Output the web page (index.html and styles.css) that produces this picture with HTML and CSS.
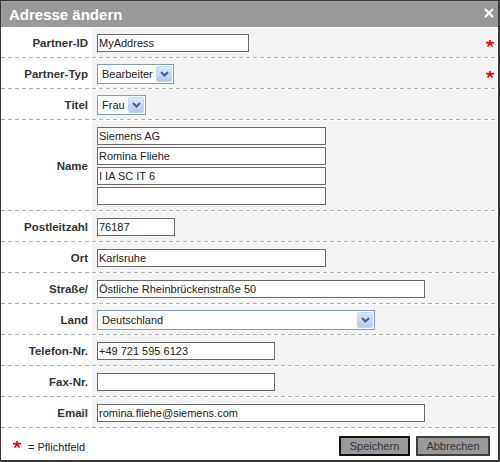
FILE: index.html
```html
<!DOCTYPE html>
<html lang="de">
<head>
  <meta charset="UTF-8">
  <title>Adresse ändern</title>
  <link rel="stylesheet" href="styles.css">
</head>
<body>

  <div class="dialog">
    <div class="dialog-title">
      <span>Adresse ändern</span>
      <svg class="close" width="10" height="10" viewBox="0 0 10 10"><path d="M1 1L9 9M9 1L1 9" stroke="#fff" stroke-width="2" fill="none"/></svg>
    </div>

    <div class="rows">
      <div class="row">
        <div class="lbl">Partner-ID</div>
        <div class="field">
          <input class="txt w-id" type="text" value="MyAddress">
          <svg class="req" width="8" height="7" viewBox="0 0 8 7"><path d="M4 0V3.4M0 2.6H8M4 2.8L1.6 6.6M4 2.8L6.4 6.6" stroke="#f00" stroke-width="1.6" fill="none"/></svg>
        </div>
      </div>

      <div class="row">
        <div class="lbl">Partner-Typ</div>
        <div class="field">
          <div class="combo w-typ">
            <span class="combo-text">Bearbeiter</span>
            <span class="combo-btn"><svg width="9" height="6" viewBox="0 0 9 6"><path d="M1 1L4.5 4.5L8 1" stroke="#4b5e86" stroke-width="2" fill="none"/></svg></span>
          </div>
          <svg class="req" width="8" height="7" viewBox="0 0 8 7"><path d="M4 0V3.4M0 2.6H8M4 2.8L1.6 6.6M4 2.8L6.4 6.6" stroke="#f00" stroke-width="1.6" fill="none"/></svg>
        </div>
      </div>

      <div class="row">
        <div class="lbl">Titel</div>
        <div class="field">
          <div class="combo w-titel">
            <span class="combo-text">Frau</span>
            <span class="combo-btn"><svg width="9" height="6" viewBox="0 0 9 6"><path d="M1 1L4.5 4.5L8 1" stroke="#4b5e86" stroke-width="2" fill="none"/></svg></span>
          </div>
        </div>
      </div>

      <div class="row">
        <div class="lbl">Name</div>
        <div class="field multi">
          <input class="txt w-m" type="text" value="Siemens AG">
          <input class="txt w-m" type="text" value="Romina Fliehe">
          <input class="txt w-m" type="text" value="I IA SC IT 6">
          <input class="txt w-m" type="text" value="">
        </div>
      </div>

      <div class="row">
        <div class="lbl">Postleitzahl</div>
        <div class="field">
          <input class="txt w-plz" type="text" value="76187">
        </div>
      </div>

      <div class="row">
        <div class="lbl">Ort</div>
        <div class="field">
          <input class="txt w-m" type="text" value="Karlsruhe">
        </div>
      </div>

      <div class="row">
        <div class="lbl">Straße/</div>
        <div class="field">
          <input class="txt w-l" type="text" value="Östliche Rheinbrückenstraße 50">
        </div>
      </div>

      <div class="row">
        <div class="lbl">Land</div>
        <div class="field">
          <div class="combo w-land">
            <span class="combo-text">Deutschland</span>
            <span class="combo-btn"><svg width="9" height="6" viewBox="0 0 9 6"><path d="M1 1L4.5 4.5L8 1" stroke="#4b5e86" stroke-width="2" fill="none"/></svg></span>
          </div>
        </div>
      </div>

      <div class="row">
        <div class="lbl">Telefon-Nr.</div>
        <div class="field">
          <input class="txt w-tel" type="text" value="+49 721 595 6123">
        </div>
      </div>

      <div class="row">
        <div class="lbl">Fax-Nr.</div>
        <div class="field">
          <input class="txt w-tel" type="text" value="">
        </div>
      </div>

      <div class="row">
        <div class="lbl">Email</div>
        <div class="field">
          <input class="txt w-l" type="text" value="romina.fliehe@siemens.com">
        </div>
      </div>
    </div>

    <div class="footer">
      <div class="legend">
        <svg class="req" width="8" height="7" viewBox="0 0 8 7"><path d="M4 0V3.4M0 2.6H8M4 2.8L1.6 6.6M4 2.8L6.4 6.6" stroke="#f00" stroke-width="1.6" fill="none"/></svg>
        <span class="legend-text">= Pflichtfeld</span>
      </div>
      <div class="buttons">
        <button class="btn btn-default">Speichern</button>
        <button class="btn">Abbrechen</button>
      </div>
    </div>
  </div>

</body>
</html>
```

FILE: styles.css
```css
body {
  margin: 0;
  background-color: #fff;
  font-family: "Liberation Sans", Arial, sans-serif;
  color: #333;
}

.dialog {
  width: 500px;
  height: 462px;
  box-sizing: border-box;
  border-style: solid;
  border-color: #383838;
  border-width: 1px 2px 2px 1px;
  background-color: #fff;
}

.dialog-title {
  display: flex;
  justify-content: space-between;
  align-items: flex-start;
  height: 26px;
  box-sizing: border-box;
  padding: 2px 4px 0 8px;
  background-color: #999;
  color: #fff;
  font-size: 15px;
  font-weight: bold;
  line-height: 24px;
}

.close {
  display: block;
  margin-top: 5px;
}

.rows {
  padding-right: 1px;
}

.row {
  display: grid;
  grid-template-columns: 91px 1fr;
  padding: 1px 0 1px 0;
  background: repeating-linear-gradient(90deg, #b0b0b8 0 4px, transparent 4px 7px) left bottom / 100% 1px no-repeat, #fff;
}

.lbl {
  display: flex;
  align-items: center;
  justify-content: flex-end;
  padding-right: 4px;
  font-size: 11.5px;
  font-weight: bold;
  color: #333;
}

.field {
  display: flex;
  align-items: center;
  height: 29px;
  box-sizing: border-box;
  padding: 1px 3px 0 5px;
  background-color: #f4f4f4;
}

.field.multi {
  height: auto;
  flex-direction: column;
  align-items: flex-start;
  gap: 2px;
  padding: 6px 3px 5px 5px;
}

.req {
  display: block;
  margin-left: auto;
}

.txt {
  display: block;
  height: 18px;
  box-sizing: border-box;
  margin: 0;
  padding: 0 1px;
  border: 1px solid #6a6a6a;
  background-color: #fff;
  font-family: "Liberation Sans", Arial, sans-serif;
  font-size: 11px;
  color: #222;
  outline: none;
}

.w-id { width: 152px; }
.w-m { width: 229px; }
.w-l { width: 328px; }
.w-plz { width: 78px; }
.w-tel { width: 178px; }

.combo {
  display: flex;
  align-items: center;
  height: 20px;
  box-sizing: border-box;
  padding: 1px;
  border: 1px solid #7f9db9;
  background-color: #fff;
  font-size: 11px;
  color: #222;
}

.w-typ { width: 77px; }
.w-titel { width: 49px; }
.w-land { width: 278px; }

.combo-text {
  flex: 1;
  padding-left: 3px;
}

.combo-btn {
  display: flex;
  align-items: center;
  justify-content: center;
  width: 16px;
  height: 16px;
  box-sizing: border-box;
  border: 1px solid #c3d3fa;
  border-radius: 2px;
  background: linear-gradient(#dce6fd, #b4c8f7);
}

.footer {
  display: flex;
  justify-content: space-between;
  align-items: flex-start;
  height: 32px;
  box-sizing: border-box;
  padding: 8px 8px 0 11px;
}

.legend {
  display: flex;
  align-items: flex-start;
  margin-top: 5px;
}

.legend .req {
  margin: 0 7px 0 1px;
}

.legend-text {
  font-size: 11px;
  line-height: 13px;
  color: #222;
}

.buttons {
  display: flex;
  gap: 6px;
}

.btn {
  height: 20px;
  box-sizing: border-box;
  padding: 0;
  border: 2px solid #404040;
  background-color: #999;
  font-family: "Liberation Sans", Arial, sans-serif;
  font-size: 11px;
  color: #333;
  width: 74px;
}

.btn-default {
  width: 71px;
  border-color: #111;
}
```
